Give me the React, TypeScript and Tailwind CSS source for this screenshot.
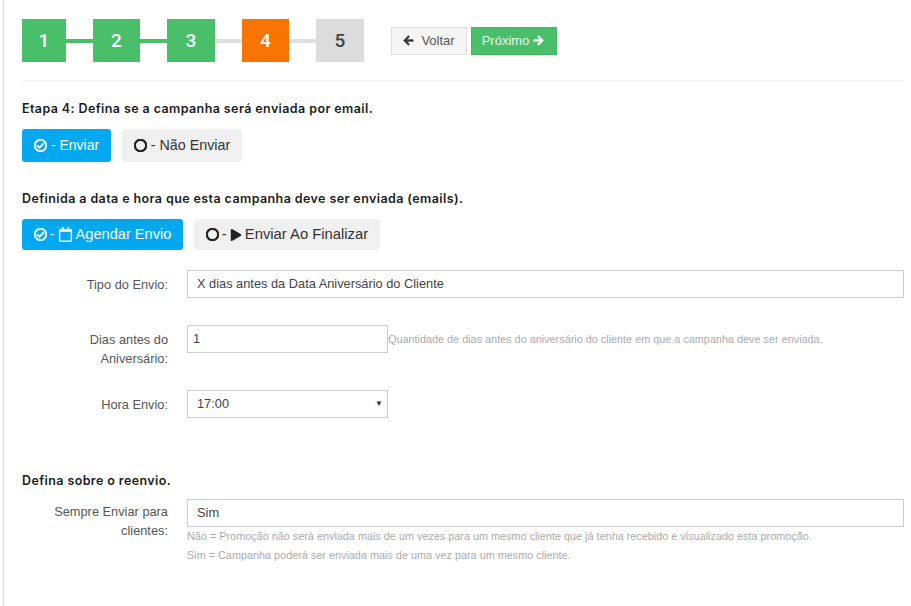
import { FaArrowLeft, FaArrowRight, FaPlay, FaRegCalendar, FaRegCheckCircle, FaRegCircle } from "react-icons/fa";

const body = "font-['Liberation_Sans',Arial,sans-serif]";
const heading = "font-['Inter','Noto_Sans',sans-serif] text-[12.5px] font-semibold leading-[16px] tracking-[0.4px] text-[#1c1c1c]";

function Step({ n, width, cls }: { n: string; width: string; cls: string }) {
  return (
    <div className={`flex h-[43px] items-center justify-center pt-[2px] font-['Roboto',sans-serif] text-[19px] font-medium ${width} ${cls}`}>
      {n}
    </div>
  );
}

function Line({ on }: { on: boolean }) {
  return <div className={`h-[4px] w-[27px] ${on ? "bg-[#4abf69]" : "bg-[#e0e0e0]"}`} />;
}

export default function App() {
  return (
    <div className={`${body} h-[606px] w-[911px] overflow-hidden bg-white`}>
      <div className="ml-[3px] h-[606px] border-l border-[#d4d4d4] pl-[18px] pr-[7px]">
        <div className="flex items-center pt-[19px]">
          <Step n="1" width="w-[44px]" cls="bg-[#4abf69] text-white" />
          <Line on />
          <Step n="2" width="w-[47px]" cls="bg-[#4abf69] text-white" />
          <Line on />
          <Step n="3" width="w-[48px]" cls="bg-[#4abf69] text-white" />
          <Line on={false} />
          <Step n="4" width="w-[47px]" cls="bg-[#f97300] text-white" />
          <Line on={false} />
          <Step n="5" width="w-[48px]" cls="bg-[#dcdcdc] text-[#444]" />
          <div className="ml-[27px] flex items-center gap-[4px]">
            <button className="flex h-[28px] w-[76px] items-center justify-center gap-[7px] border border-[#dedede] bg-[#f5f5f5] text-[13px] text-[#555]">
              <FaArrowLeft className="stroke-current stroke-[30] text-[11px] text-[#333]" /> Voltar
            </button>
            <button className="flex h-[28px] w-[86px] items-center justify-center gap-[4px] border border-[#45b463] bg-[#4abf69] pr-[2px] text-[13px] text-[#e8f7ec]">
              Próximo <FaArrowRight className="stroke-current stroke-[30] text-[11px] text-white" />
            </button>
          </div>
        </div>

        <div className="mt-[18px] border-t border-[#eeeeee]" />

        <h2 className={`mt-[20px] ${heading}`}>Etapa 4: Defina se a campanha será enviada por email.</h2>
        <div className="mt-[12px] flex gap-[11px]">
          <button className="flex h-[33px] w-[89px] items-center justify-center gap-[4px] rounded-[3px] bg-[#03a9f0] text-[14px] text-white">
            <FaRegCheckCircle className="stroke-current stroke-[30] text-[13px]" /> - Enviar
          </button>
          <button className="flex h-[33px] w-[120px] items-center justify-center gap-[4px] rounded-[3px] bg-[#f0f0f0] text-[14.3px] text-[#333]">
            <FaRegCircle className="stroke-current stroke-[40] text-[13px] text-[#222]" /> - Não Enviar
          </button>
        </div>

        <h2 className={`mt-[29px] ${heading}`}>Definida a data e hora que esta campanha deve ser enviada (emails).</h2>
        <div className="mt-[12px] flex gap-[11px]">
          <button className="flex h-[31px] w-[161px] items-center justify-center gap-[3px] rounded-[3px] bg-[#03a9f0] text-[14.6px] text-white">
            <FaRegCheckCircle className="stroke-current stroke-[30] text-[13px]" /> - <FaRegCalendar className="text-[15px]" /> Agendar Envio
          </button>
          <button className="flex h-[31px] w-[186px] items-center justify-center gap-[3px] rounded-[3px] bg-[#f0f0f0] text-[14.8px] text-[#333]">
            <FaRegCircle className="stroke-current stroke-[40] text-[13px] text-[#222]" /> - <FaPlay className="text-[12px] text-[#222]" /> Enviar Ao Finalizar
          </button>
        </div>

        <div className="mt-[20px] grid grid-cols-[146px_1fr] items-start gap-x-[19px] text-[12.8px] text-[#555]">
          <label className="pt-[6px] text-right leading-[18px]">Tipo do Envio:</label>
          <div className="flex h-[28px] items-center border border-[#cccccc] bg-white pl-[9px] text-[#444]">X dias antes da Data Aniversário do Cliente</div>

          <label className="mt-[27px] pl-[24px] pt-[5px] text-right leading-[19px]">Dias antes do Aniversário:</label>
          <div className="mt-[27px] flex items-start">
            <div className="flex h-[28px] w-[201px] shrink-0 items-center border border-[#cccccc] pl-[5px] text-[#444]">1</div>
            <span className="mt-[7px] text-[10.85px] leading-[14px] text-[#aaaaaa]">Quantidade de dias antes do aniversário do cliente em que a campanha deve ser enviada.</span>
          </div>

          <label className="mt-[22px] pt-[6px] text-right leading-[18px]">Hora Envio:</label>
          <div className="mt-[22px] flex h-[28px] w-[201px] items-center justify-between border border-[#cccccc] pl-[9px] pr-[4px] text-[#444]">
            <span>17:00</span>
            <span className="text-[8px] text-[#333]">▼</span>
          </div>
        </div>

        <h2 className={`mt-[55px] ${heading}`}>Defina sobre o reenvio.</h2>

        <div className="mt-[10px] grid grid-cols-[146px_1fr] items-start gap-x-[19px] text-[12.8px] text-[#555]">
          <label className="pl-[20px] pt-[3px] text-right leading-[19px]">Sempre Enviar para clientes:</label>
          <div>
            <div className="flex h-[28px] items-center border border-[#cccccc] pl-[9px] text-[#444]">Sim</div>
            <p className="text-[10.85px] leading-[19px] text-[#aaaaaa]">Não = Promoção não será enviada mais de um vezes para um mesmo cliente que já tenha recebido e visualizado esta promoção.</p>
            <p className="text-[10.85px] leading-[19px] text-[#aaaaaa]">Sim = Campanha poderá ser enviada mais de uma vez para um mesmo cliente.</p>
          </div>
        </div>
      </div>
    </div>
  );
}
